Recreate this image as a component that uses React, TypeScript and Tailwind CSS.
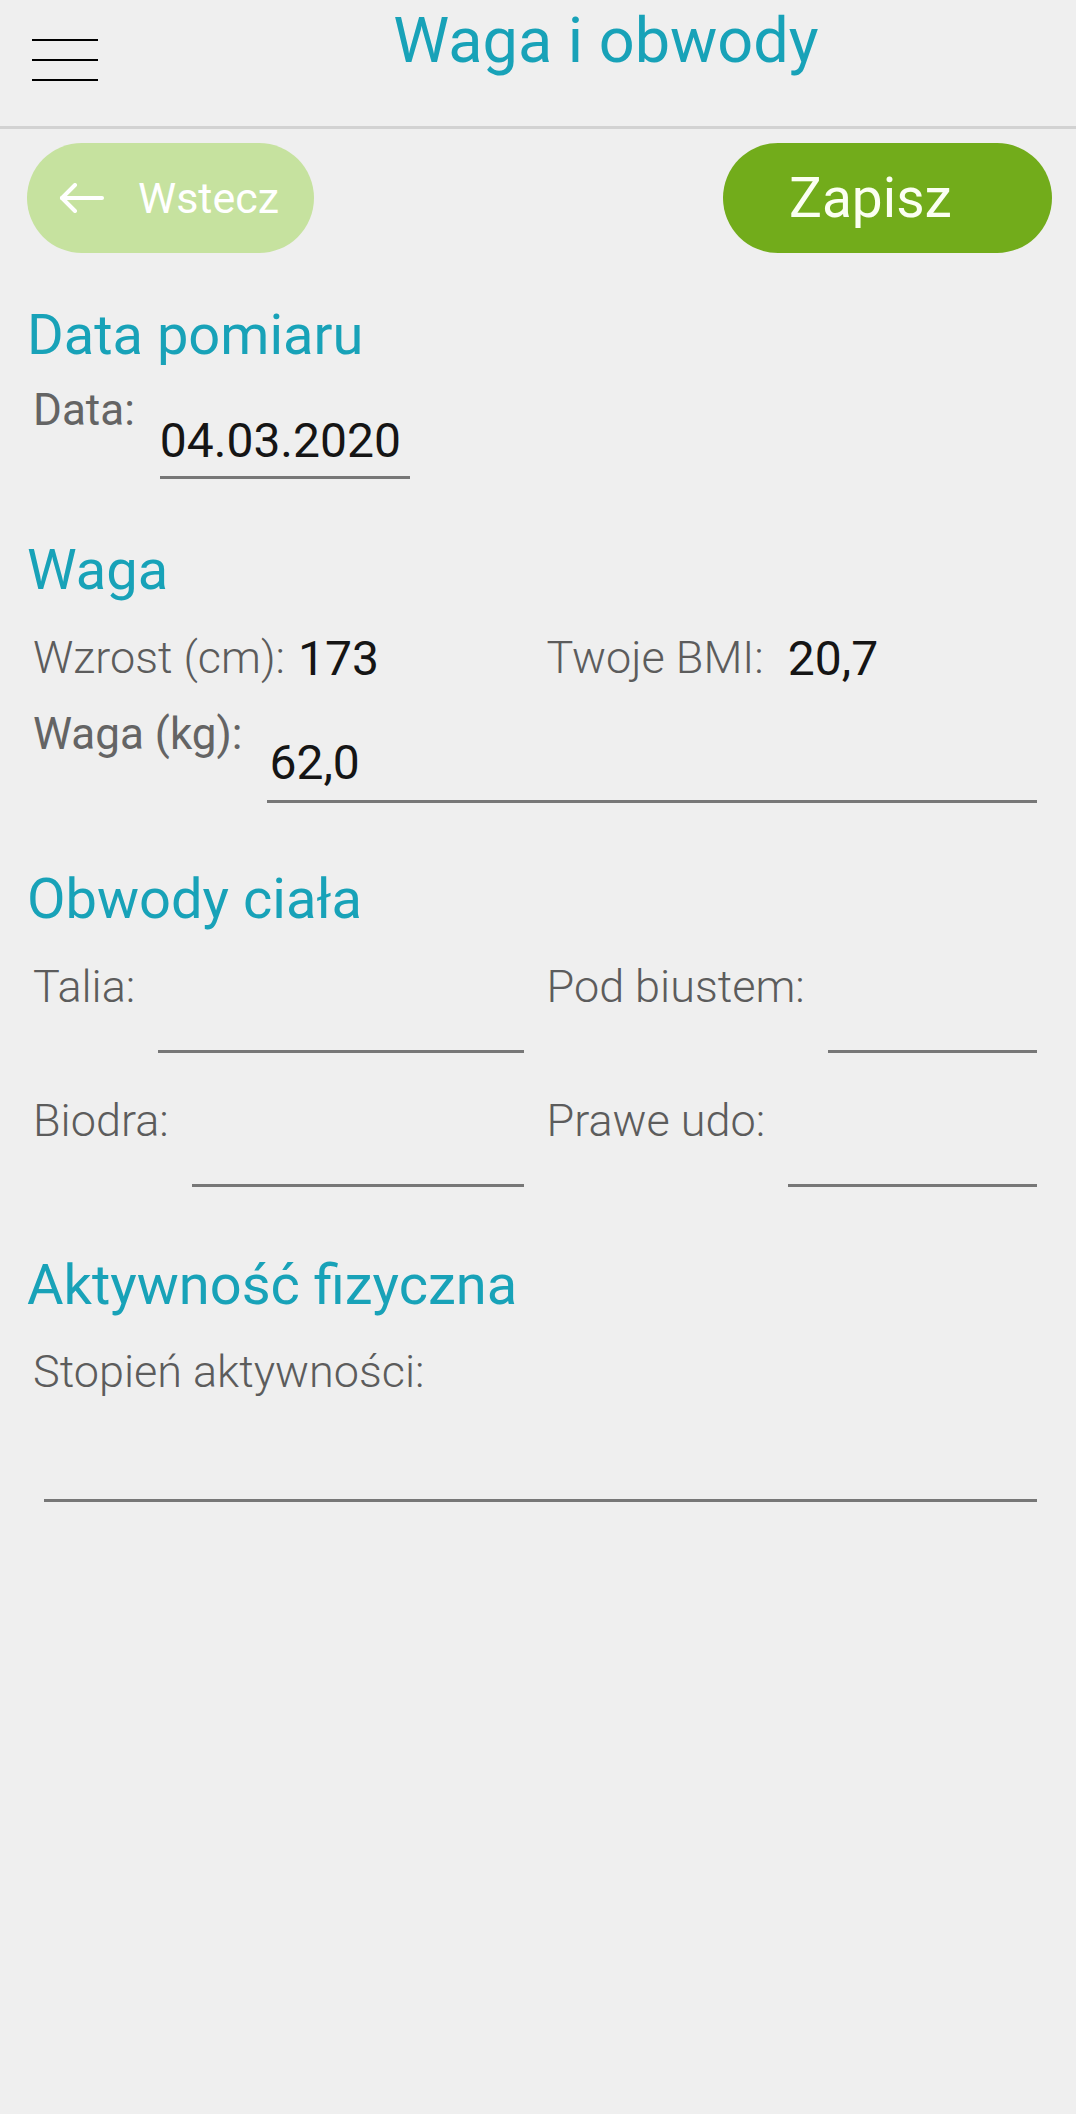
const HEADING = "text-[56px] leading-none text-[#18a2b8]";
const LABEL = "text-[45px] leading-none font-light text-[#5c5c5c] whitespace-nowrap";
const VALUE = "text-[48px] leading-none text-[#151515]";

function Field({ label }: { label: string }) {
  return (
    <div className="flex items-start">
      <span className={LABEL}>{label}</span>
      <div className="ml-[23px] h-[89px] flex-1 border-b-[3px] border-[#777]" />
    </div>
  );
}

export default function App() {
  return (
    <div className="min-h-screen bg-[#efefef] font-['Roboto',sans-serif]">
      <header className="flex h-[129px] items-start border-b-[3px] border-[#d2d2d2]">
        <button className="ml-[32px] mt-[39px] flex w-[66px] flex-col gap-[18px]">
          <span className="h-[2px] w-full bg-black" />
          <span className="h-[2px] w-full bg-black" />
          <span className="h-[2px] w-full bg-black" />
        </button>
        <h1 className="flex-1 pl-[38px] pt-[9px] text-center text-[63px] leading-none text-[#18a2b8]">
          Waga i obwody
        </h1>
      </header>

      <div className="mt-[14px] flex justify-between pl-[27px] pr-[24px]">
        <button className="flex h-[110px] w-[287px] items-center rounded-full bg-[#c6e29f] pl-[32px] text-white">
          <svg width="45" height="30" viewBox="0 0 45 30" fill="none" stroke="currentColor" strokeWidth="4" strokeLinecap="round" strokeLinejoin="round">
            <path d="M43 15H3" />
            <path d="M16 2L3 15l13 13" />
          </svg>
          <span className="ml-[34px] text-[43px] leading-none">Wstecz</span>
        </button>
        <button className="flex h-[110px] w-[329px] items-center rounded-full bg-[#72ac1b] pl-[66px] text-[#fbfff2]">
          <span className="text-[55px] leading-none">Zapisz</span>
        </button>
      </div>

      <main className="pl-[27px] pr-[39px]">
        <h2 className={`mt-[54px] ${HEADING}`}>Data pomiaru</h2>
        <div className="ml-[6px] mt-[25px] flex items-start">
          <span className="text-[44px] leading-none text-[#646464]">Data:</span>
          <div className="ml-[25px] w-[250px] border-b-[3px] border-[#777] pb-[11px] pt-[29px]">
            <span className={VALUE}>04.03.2020</span>
          </div>
        </div>

        <h2 className={`mt-[63px] ${HEADING}`}>Waga</h2>
        <div className="ml-[6px] mt-[37px] grid grid-cols-2 gap-x-[23px]">
          <div className="flex items-start">
            <span className={LABEL}>Wzrost (cm):</span>
            <span className={`ml-[13px] ${VALUE}`}>173</span>
          </div>
          <div className="flex items-start">
            <span className={LABEL}>Twoje BMI:</span>
            <span className={`ml-[24px] ${VALUE}`}>20,7</span>
          </div>
        </div>
        <div className="ml-[6px] mt-[29px] flex items-start">
          <span className="whitespace-nowrap text-[44px] leading-none text-[#646464]">Waga (kg):</span>
          <div className="ml-[25px] flex-1 border-b-[3px] border-[#777] pb-[13px] pl-[2px] pt-[27px]">
            <span className={VALUE}>62,0</span>
          </div>
        </div>

        <h2 className={`mt-[68px] ${HEADING}`}>Obwody ciała</h2>
        <div className="ml-[6px] mt-[37px] grid grid-cols-2 gap-x-[23px] gap-y-[45px]">
          <Field label="Talia:" />
          <Field label="Pod biustem:" />
          <Field label="Biodra:" />
          <Field label="Prawe udo:" />
        </div>

        <h2 className={`mt-[70px] ${HEADING}`}>Aktywność fizyczna</h2>
        <div className="ml-[6px] mt-[36px]">
          <span className={LABEL}>Stopień aktywności:</span>
          <div className="ml-[11px] h-[108px] border-b-[3px] border-[#777]" />
        </div>
      </main>
    </div>
  );
}
